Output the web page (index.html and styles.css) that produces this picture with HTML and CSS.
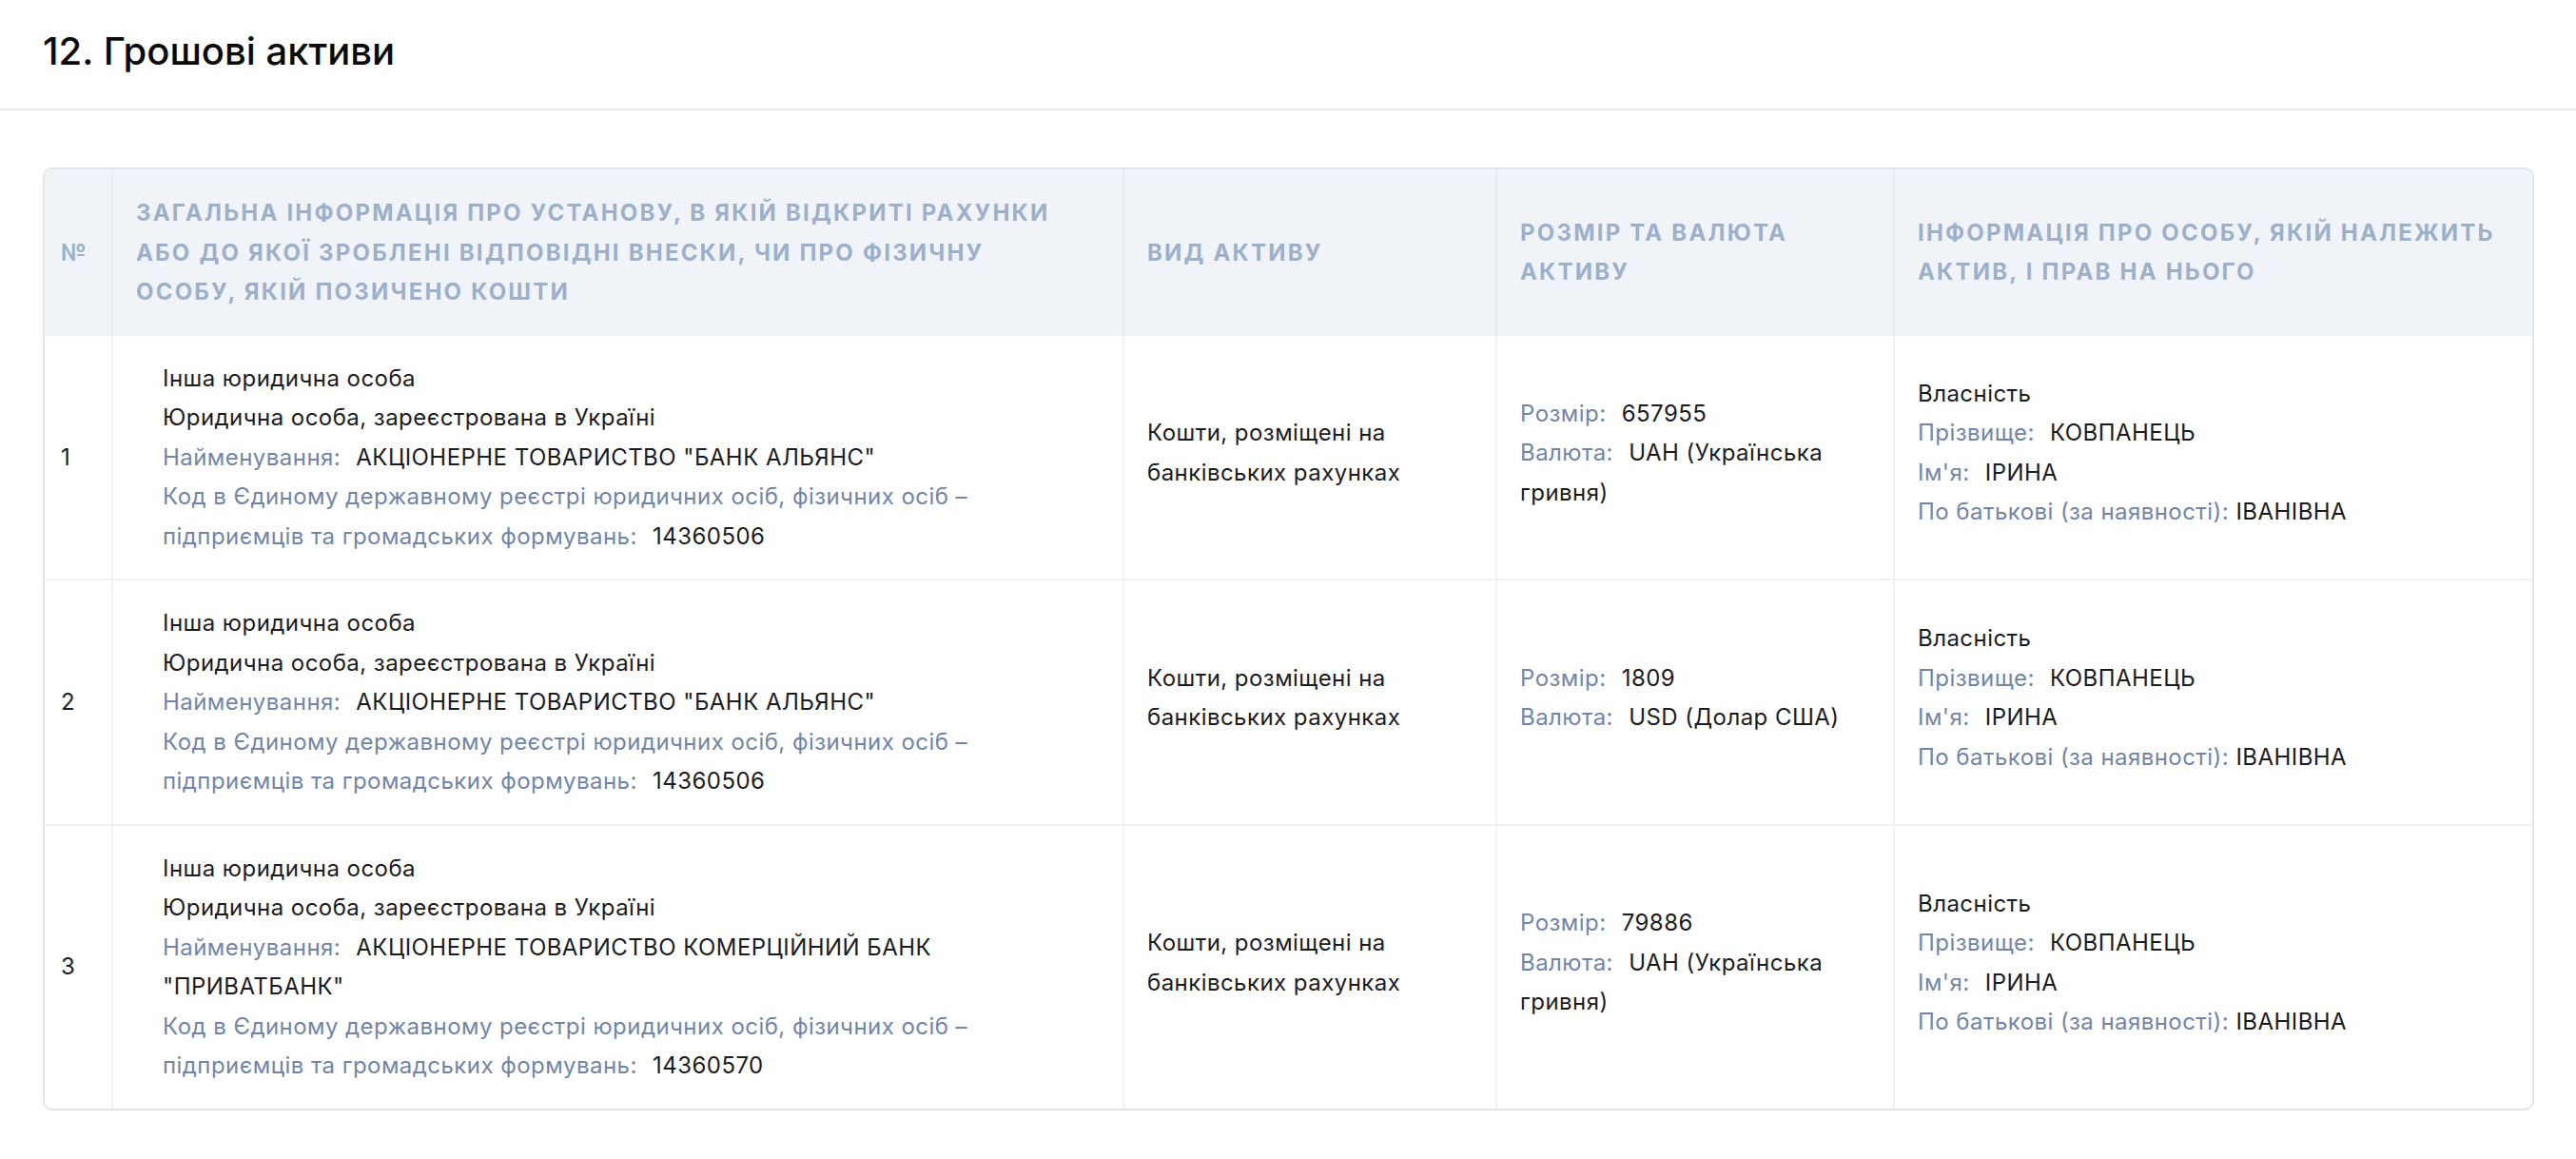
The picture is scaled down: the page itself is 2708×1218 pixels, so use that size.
FILE: index.html
```html
<!DOCTYPE html>
<html lang="uk">
<head>
<meta charset="utf-8">
<title>12. Грошові активи</title>
<link rel="stylesheet" href="styles.css">
</head>
<body>
<section class="section">
  <header class="section-head">
    <h2 class="section-title">12. Грошові активи</h2>
  </header>
  <div class="table-wrap">
    <div class="grid">
      <div class="row head">
        <div class="cell c-num">№</div>
        <div class="cell"><div class="head-wide">Загальна інформація про установу, в якій відкриті рахунки або до якої зроблені відповідні внески, чи про фізичну особу, якій позичено кошти</div></div>
        <div class="cell">Вид активу</div>
        <div class="cell">Розмір та валюта активу</div>
        <div class="cell last">Інформація про особу, якій належить актив, і прав на нього</div>
      </div>

      <div class="row body">
        <div class="cell c-num">1</div>
        <div class="cell"><div class="inst">
          <div>Інша юридична особа</div>
          <div>Юридична особа, зареєстрована в Україні</div>
          <div><span class="lbl">Найменування:</span> <span class="val">АКЦІОНЕРНЕ ТОВАРИСТВО "БАНК АЛЬЯНС"</span></div>
          <div><span class="lbl">Код в Єдиному державному реєстрі юридичних осіб, фізичних осіб – підприємців та громадських формувань:</span> <span class="val">14360506</span></div>
        </div></div>
        <div class="cell"><div class="blk">Кошти, розміщені на банківських рахунках</div></div>
        <div class="cell"><div class="blk">
          <div><span class="lbl">Розмір:</span> <span class="val">657955</span></div>
          <div><span class="lbl">Валюта:</span> <span class="val">UAH (Українська гривня)</span></div>
        </div></div>
        <div class="cell last"><div class="blk">
          <div>Власність</div>
          <div><span class="lbl">Прізвище:</span> <span class="val">КОВПАНЕЦЬ</span></div>
          <div><span class="lbl">Ім'я:</span> <span class="val">ІРИНА</span></div>
          <div><span class="lbl tight">По батькові (за наявності):</span> <span class="val">ІВАНІВНА</span></div>
        </div></div>
      </div>

      <div class="row body">
        <div class="cell c-num">2</div>
        <div class="cell"><div class="inst">
          <div>Інша юридична особа</div>
          <div>Юридична особа, зареєстрована в Україні</div>
          <div><span class="lbl">Найменування:</span> <span class="val">АКЦІОНЕРНЕ ТОВАРИСТВО "БАНК АЛЬЯНС"</span></div>
          <div><span class="lbl">Код в Єдиному державному реєстрі юридичних осіб, фізичних осіб – підприємців та громадських формувань:</span> <span class="val">14360506</span></div>
        </div></div>
        <div class="cell"><div class="blk">Кошти, розміщені на банківських рахунках</div></div>
        <div class="cell"><div class="blk">
          <div><span class="lbl">Розмір:</span> <span class="val">1809</span></div>
          <div><span class="lbl">Валюта:</span> <span class="val">USD (Долар США)</span></div>
        </div></div>
        <div class="cell last"><div class="blk">
          <div>Власність</div>
          <div><span class="lbl">Прізвище:</span> <span class="val">КОВПАНЕЦЬ</span></div>
          <div><span class="lbl">Ім'я:</span> <span class="val">ІРИНА</span></div>
          <div><span class="lbl tight">По батькові (за наявності):</span> <span class="val">ІВАНІВНА</span></div>
        </div></div>
      </div>

      <div class="row body">
        <div class="cell c-num">3</div>
        <div class="cell"><div class="inst">
          <div>Інша юридична особа</div>
          <div>Юридична особа, зареєстрована в Україні</div>
          <div><span class="lbl">Найменування:</span> <span class="val">АКЦІОНЕРНЕ ТОВАРИСТВО КОМЕРЦІЙНИЙ БАНК "ПРИВАТБАНК"</span></div>
          <div><span class="lbl">Код в Єдиному державному реєстрі юридичних осіб, фізичних осіб – підприємців та громадських формувань:</span> <span class="val">14360570</span></div>
        </div></div>
        <div class="cell"><div class="blk">Кошти, розміщені на банківських рахунках</div></div>
        <div class="cell"><div class="blk">
          <div><span class="lbl">Розмір:</span> <span class="val">79886</span></div>
          <div><span class="lbl">Валюта:</span> <span class="val">UAH (Українська гривня)</span></div>
        </div></div>
        <div class="cell last"><div class="blk">
          <div>Власність</div>
          <div><span class="lbl">Прізвище:</span> <span class="val">КОВПАНЕЦЬ</span></div>
          <div><span class="lbl">Ім'я:</span> <span class="val">ІРИНА</span></div>
          <div><span class="lbl tight">По батькові (за наявності):</span> <span class="val">ІВАНІВНА</span></div>
        </div></div>
      </div>
    </div>
  </div>
</section>
</body>
</html>
```

FILE: styles.css
```css
* { box-sizing: border-box; }
html, body { margin: 0; padding: 0; background: #ffffff; }
body {
  font-family: Inter, "Noto Sans", "Liberation Sans", sans-serif;
  color: #1b1c1f;
  width: 2708px;
}
.section { padding-bottom: 48px; }
.section-head {
  padding: 30px 45px 36px;
  border-bottom: 2px solid #e3e7ed;
}
.section-title {
  margin: 0;
  font-size: 40px;
  line-height: 48px;
  font-weight: 500;
  color: #0b0b0c;
  letter-spacing: 0;
}
.table-wrap {
  margin: 60px 44px 0 45px;
  border: 2px solid #e1e5eb;
  border-radius: 10px;
  overflow: hidden;
}
.grid {
  display: grid;
  grid-template-columns: 72px 1063px 392px 418px 1fr;
}
.row { display: contents; }
.cell {
  display: flex;
  flex-direction: column;
  justify-content: center;
  padding: 24px 24px;
  font-size: 24px;
  line-height: 41.5px;
  border-right: 2px solid #f0f2f5;
}
.cell.last { border-right: none; }
.c-num { padding-left: 17px; padding-right: 8px; }
.head .cell {
  background: #f0f4f9;
  border-right-color: #e8ecf2;
  padding-top: 25px;
  padding-bottom: 25px;
  font-weight: 700;
  text-transform: uppercase;
  letter-spacing: 2.2px;
  color: #9eb0c9;
}
.head-wide { max-width: 975px; }
.body .cell { border-top: 2px solid #eff1f4; letter-spacing: 0.45px; }
.row.head + .row.body .cell { border-top: none; }
.inst { margin-left: 28px; max-width: 945px; }
.blk { margin-bottom: 9px; }
.lbl { color: #7285a6; margin-right: 9px; }
.lbl.tight { margin-right: 0; }
.val { color: #1b1c1f; }
```
